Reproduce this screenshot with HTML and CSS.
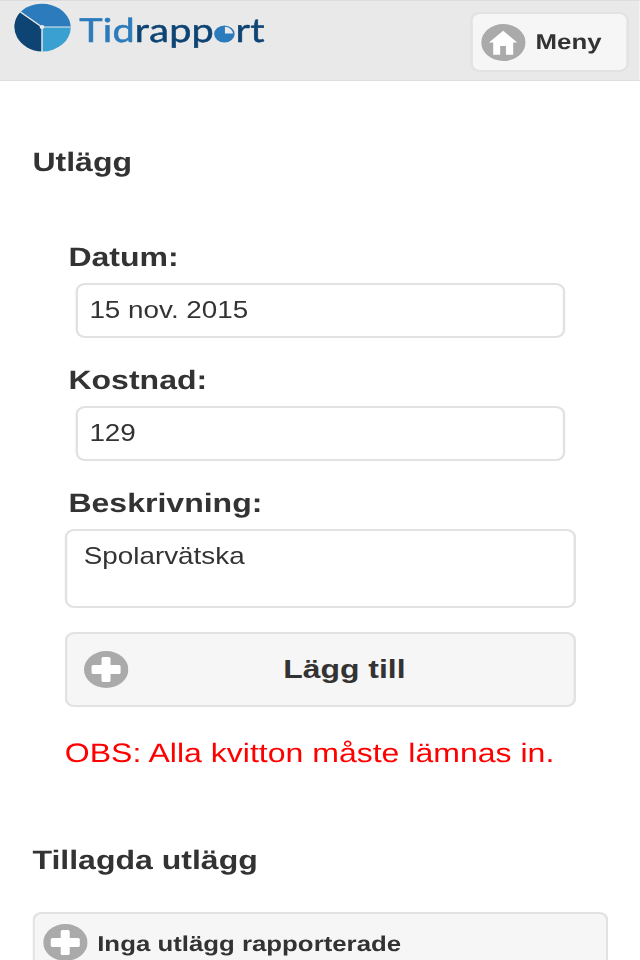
FILE: index.html
```html
<!DOCTYPE html>
<html lang="sv">
<head>
    <meta charset="UTF-8">
    <meta name="viewport" content="width=device-width, initial-scale=1.0">
    <title>Tidrapport - Utlägg</title>
    <link rel="stylesheet" href="styles.css">
</head>
<body>
    <div class="app">
        <header class="header">
            <a class="logo" href="#">
                <svg class="logo-pie" viewBox="0 0 49 50" width="49" height="50">
                    <path d="M24 24 L6 9 A24 24 0 0 1 48 24 Z" fill="#2b7bbd"/>
                    <path d="M24 24 L48 24 A24 24.500 0 0 1 24 48.500 Z" fill="#3aa0d2"/>
                    <path d="M24 24 L24 48.500 A24 24.500 0 0 1 6 9 Z" fill="#0d4474"/>
                    <path d="M6 9 L24 24 L24 49 M24 24 L48 24" fill="none" stroke="#e9e9e9" stroke-width="1.200"/>
                    <circle cx="24" cy="24" r="2" fill="#e9e9e9"/>
                </svg>
                <span class="logo-text"><span class="logo-tid">Tid</span>rapp<svg class="logo-o" viewBox="0 0 20 20" width="18" height="18"><circle cx="10" cy="10" r="9.500" fill="#2b7bbd"/><path d="M10.500 9.500 L10.500 2 A8 8 0 0 1 18 9.500 Z" fill="#e9e9e9"/></svg>rt</span>
            </a>
            <a class="menu-btn" href="#">
                <svg class="icon" viewBox="0 0 37 37" width="37" height="37">
                    <circle cx="18.500" cy="18.500" r="18.500" fill="#aaa"/>
                    <path d="M18.300 6.700 L30 18.500 H26.700 V30.700 H20.600 V22 H15.800 V30.700 H10 V18.500 H6.500 Z" fill="#fff"/>
                </svg>
                <span>Meny</span>
            </a>
        </header>

        <main class="page">
            <h2 class="title">Utlägg</h2>

            <form class="form">
                <label class="label" for="datum">Datum:</label>
                <input class="field" type="text" id="datum" value="15 nov. 2015">

                <label class="label" for="kostnad">Kostnad:</label>
                <input class="field" type="text" id="kostnad" value="129">

                <label class="label" for="beskrivning">Beskrivning:</label>
                <textarea class="area" id="beskrivning">Spolarvätska</textarea>

                <button class="add-btn" type="button">
                    <svg class="icon add-icon" viewBox="0 0 37 37" width="37" height="37">
                        <circle cx="18.500" cy="18.500" r="18.500" fill="#aaa"/>
                        <rect x="14.600" y="6" width="7.500" height="25" rx="1.500" fill="#fff"/>
                        <rect x="6.300" y="14" width="24.200" height="9" rx="1.500" fill="#fff"/>
                    </svg>
                    Lägg till
                </button>

                <p class="note">OBS: Alla kvitton måste lämnas in.</p>
            </form>

            <h2 class="title title-added">Tillagda utlägg</h2>

            <div class="list-item">
                <svg class="icon" viewBox="0 0 37 37" width="37" height="37">
                    <circle cx="18.500" cy="18.500" r="18.500" fill="#aaa"/>
                    <rect x="14.600" y="6" width="7.500" height="25" rx="1.500" fill="#fff"/>
                    <rect x="6.300" y="14" width="24.200" height="9" rx="1.500" fill="#fff"/>
                </svg>
                <span>Inga utlägg rapporterade</span>
            </div>
        </main>
    </div>
</body>
</html>
```

FILE: styles.css
```css
html, body {
    margin: 0;
    padding: 0;
    height: 960px;
    overflow: hidden;
    background-color: #fff;
}
body {
    font-family: "Liberation Sans", Arial, sans-serif;
    color: #333;
    text-rendering: geometricPrecision;
}
/* the whole page is drawn 20% wider than it is tall, and a bit soft */
.app {
    width: 533.33px;
    transform: scaleX(1.2);
    transform-origin: 0 0;
    filter: blur(0.35px);
}
.header {
    box-sizing: border-box;
    height: 81px;
    display: flex;
    justify-content: space-between;
    background-color: #e9e9e9;
    border-top: 1px solid #ddd;
    border-bottom: 1px solid #ddd;
    padding: 2px 9px 0 11px;
}
.logo {
    display: flex;
    align-items: flex-start;
    gap: 6px;
    text-decoration: none;
    filter: blur(0.4px);
}
.logo-pie {
    display: block;
}
.logo-text {
    font-family: Lato, sans-serif;
    font-size: 33px;
    line-height: 54px;
    color: #0d4474;
    letter-spacing: 0.2px;
    -webkit-text-stroke: 0.5px;
}
.logo-tid {
    color: #2b7bbd;
}
.logo-o {
    vertical-align: -1px;
}
.menu-btn {
    box-sizing: border-box;
    width: 132px;
    height: 60px;
    margin-top: 9px;
    display: flex;
    align-items: center;
    gap: 8px;
    padding-left: 7px;
    background-color: #f6f6f6;
    border: 2px solid #e2e2e2;
    border-radius: 8px;
    color: #333;
    font-size: 21.500px;
    font-weight: bold;
    text-decoration: none;
}
.icon {
    display: block;
    flex-shrink: 0;
}
.page {
    padding: 0 27px;
}
.title {
    margin: 0;
    padding-top: 64px;
    font-size: 26.700px;
    line-height: 34px;
}
.title-added {
    padding-top: 71px;
}
.form {
    padding: 61px 27px 0 27px;
}
.label {
    display: block;
    font-size: 26.700px;
    font-weight: bold;
    line-height: 34px;
    margin-left: 3px;
}
.field {
    box-sizing: border-box;
    display: block;
    width: 408px;
    height: 55px;
    margin: 9px 0 25px 9px;
    padding: 0 9.500px;
    border: 2px solid #e2e2e2;
    border-radius: 8px;
    background-color: #fff;
    font-family: inherit;
    font-size: 23.200px;
    color: #333;
}
.area {
    box-sizing: border-box;
    display: block;
    width: 426px;
    height: 79px;
    margin: 9px 0 24px;
    padding: 9.500px 13.800px;
    border: 2px solid #e2e2e2;
    border-radius: 8px;
    background-color: #fff;
    font-family: inherit;
    font-size: 23.200px;
    line-height: 30px;
    color: #333;
    resize: none;
}
.add-btn {
    position: relative;
    box-sizing: border-box;
    display: block;
    width: 426px;
    height: 75px;
    padding: 0 0 0 40px;
    background-color: #f6f6f6;
    border: 2px solid #e2e2e2;
    border-radius: 8px;
    font-family: inherit;
    font-size: 26.600px;
    font-weight: bold;
    color: #333;
    text-align: center;
}
.add-icon {
    position: absolute;
    left: 14px;
    top: 17px;
}
.note {
    margin: 27px 0 0;
    font-size: 26.700px;
    line-height: 38px;
    color: #f00;
}
.list-item {
    box-sizing: border-box;
    width: 480px;
    height: 70px;
    margin-top: 35px;
    display: flex;
    align-items: flex-start;
    gap: 8px;
    padding: 10px 0 0 7px;
    background-color: #f6f6f6;
    border: 2px solid #e2e2e2;
    border-bottom: none;
    border-radius: 8px 8px 0 0;
    font-size: 21.500px;
    font-weight: bold;
    line-height: 40px;
}
```
